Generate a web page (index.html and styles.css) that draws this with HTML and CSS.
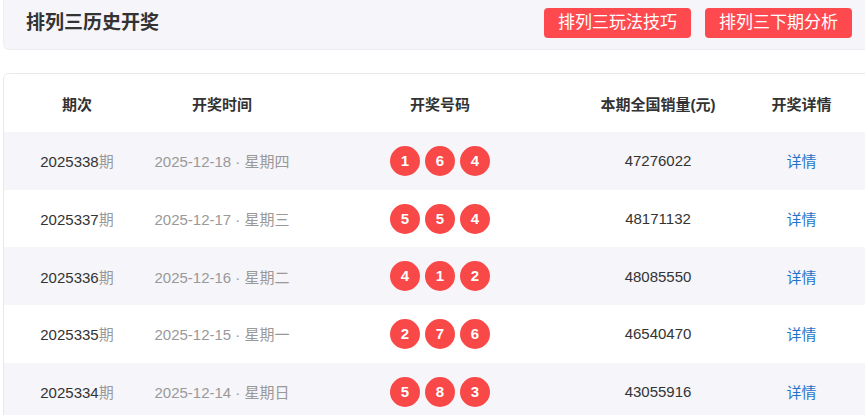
FILE: index.html
```html
<!DOCTYPE html>
<html lang="zh-CN">
<head>
<meta charset="utf-8">
<title>排列三历史开奖</title>
<link rel="stylesheet" href="styles.css">
</head>
<body>
<div class="page">
  <header class="topbar">
    <h1 class="title">排列三历史开奖</h1>
    <div class="actions">
      <a class="btn">排列三玩法技巧</a>
      <a class="btn">排列三下期分析</a>
    </div>
  </header>

  <section class="card">
    <div class="row head">
      <div class="cell">期次</div>
      <div class="cell">开奖时间</div>
      <div class="cell">开奖号码</div>
      <div class="cell">本期全国销量(元)</div>
      <div class="cell">开奖详情</div>
    </div>

    <div class="row alt">
      <div class="cell">2025338<span class="muted">期</span></div>
      <div class="cell muted">2025-12-18 · 星期四</div>
      <div class="cell balls"><span class="ball">1</span><span class="ball">6</span><span class="ball">4</span></div>
      <div class="cell">47276022</div>
      <div class="cell"><a class="link">详情</a></div>
    </div>

    <div class="row">
      <div class="cell">2025337<span class="muted">期</span></div>
      <div class="cell muted">2025-12-17 · 星期三</div>
      <div class="cell balls"><span class="ball">5</span><span class="ball">5</span><span class="ball">4</span></div>
      <div class="cell">48171132</div>
      <div class="cell"><a class="link">详情</a></div>
    </div>

    <div class="row alt">
      <div class="cell">2025336<span class="muted">期</span></div>
      <div class="cell muted">2025-12-16 · 星期二</div>
      <div class="cell balls"><span class="ball">4</span><span class="ball">1</span><span class="ball">2</span></div>
      <div class="cell">48085550</div>
      <div class="cell"><a class="link">详情</a></div>
    </div>

    <div class="row">
      <div class="cell">2025335<span class="muted">期</span></div>
      <div class="cell muted">2025-12-15 · 星期一</div>
      <div class="cell balls"><span class="ball">2</span><span class="ball">7</span><span class="ball">6</span></div>
      <div class="cell">46540470</div>
      <div class="cell"><a class="link">详情</a></div>
    </div>

    <div class="row alt">
      <div class="cell">2025334<span class="muted">期</span></div>
      <div class="cell muted">2025-12-14 · 星期日</div>
      <div class="cell balls"><span class="ball">5</span><span class="ball">8</span><span class="ball">3</span></div>
      <div class="cell">43055916</div>
      <div class="cell"><a class="link">详情</a></div>
    </div>
  </section>
</div>
</body>
</html>
```

FILE: styles.css
```css
html, body {
  margin: 0;
  padding: 0;
  overflow: hidden;
  background: #ffffff;
}

body {
  font-family: "Liberation Sans", "Noto Sans CJK SC", Arial, sans-serif;
  color: #333333;
  font-size: 15px;
}

.page {
  width: 871px;
  margin-left: 3px;
}

.topbar {
  height: 50px;
  box-sizing: border-box;
  background: #f5f5fa;
  border: 1px solid #ededf2;
  border-top: none;
  border-radius: 0 0 6px 6px;
  display: flex;
  align-items: flex-start;
  justify-content: space-between;
  padding: 8px 21px 0 22px;
}

.title {
  margin: 0;
  font-size: 19px;
  line-height: 30px;
  font-weight: bold;
  color: #333333;
}

.actions {
  display: flex;
  gap: 14px;
}

.btn {
  display: block;
  height: 30px;
  line-height: 30px;
  padding: 0 14px;
  background: #fe4a4f;
  color: #ffffff;
  font-size: 17px;
  border-radius: 4px;
  text-decoration: none;
}

.card {
  margin-top: 23px;
  border: 1px solid #e8e8ec;
  border-radius: 6px;
  overflow: hidden;
}

.row {
  display: grid;
  grid-template-columns: 146px 144px 292px 144px 1fr;
  height: 57.7px;
  align-items: center;
  background: #ffffff;
}

.row.head {
  height: 58px;
  font-weight: bold;
  color: #333333;
}

.row.alt {
  background: #f5f5fa;
}

.cell {
  text-align: center;
  white-space: nowrap;
}

.muted {
  color: #999999;
}

.balls {
  display: flex;
  justify-content: center;
  gap: 5px;
}

.ball {
  width: 30px;
  height: 30px;
  border-radius: 50%;
  background: #f94848;
  color: #ffffff;
  font-weight: bold;
  font-size: 15px;
  line-height: 30px;
  text-align: center;
}

.link {
  color: #1f74c9;
  text-decoration: none;
}
```
